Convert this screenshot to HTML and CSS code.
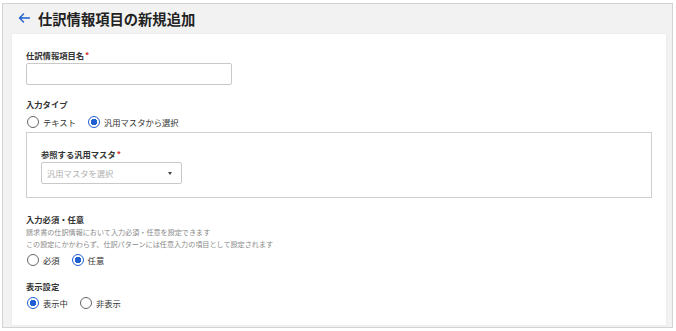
FILE: index.html
```html
<!DOCTYPE html>
<html>
<head>
    <title>仕訳情報項目の新規追加</title>
    <link rel="stylesheet" href="styles.css">
</head>
<body>
    <div class="frame">
        <header class="page-header">
            <svg class="back" width="12" height="10" viewBox="0 0 12 10">
                <path d="M11.5 5H1.5M5.5 1L1.5 5l4 4" fill="none" stroke="#1f5fd1" stroke-width="1.4" stroke-linecap="round" stroke-linejoin="round"/>
            </svg>
            <h1>仕訳情報項目の新規追加</h1>
        </header>

        <div class="card">
            <!-- 項目名 -->
            <div class="label">仕訳情報項目名<span class="req">*</span></div>
            <div class="input"></div>

            <!-- 入力タイプ -->
            <div class="label sec-type">入力タイプ</div>
            <div class="radios">
                <span class="radio"><i class="circle"></i>テキスト</span>
                <span class="radio"><i class="circle on"></i>汎用マスタから選択</span>
            </div>
            <div class="sub-box">
                <div class="label">参照する汎用マスタ<span class="req">*</span></div>
                <div class="select">
                    <span class="placeholder">汎用マスタを選択</span>
                    <span class="caret"></span>
                </div>
            </div>

            <!-- 入力必須・任意 -->
            <div class="label sec-required">入力必須・任意</div>
            <p class="desc">請求書の仕訳情報において入力必須・任意を設定できます</p>
            <p class="desc">この設定にかかわらず、仕訳パターンには任意入力の項目として設定されます</p>
            <div class="radios">
                <span class="radio"><i class="circle"></i>必須</span>
                <span class="radio"><i class="circle on"></i>任意</span>
            </div>

            <!-- 表示設定 -->
            <div class="label sec-display">表示設定</div>
            <div class="radios">
                <span class="radio"><i class="circle on"></i>表示中</span>
                <span class="radio"><i class="circle"></i>非表示</span>
            </div>
        </div>
    </div>
</body>
</html>
```

FILE: styles.css
```css
* {
    box-sizing: border-box;
}
body {
    margin: 0;
    background: #ffffff;
    font-family: "Noto Sans CJK JP", "Noto Sans", sans-serif;
    color: #333;
}
.frame {
    margin: 3px 3px 3px 2px;
    height: 325px;
    border: 1px solid #d3d3d3;
    background: #f2f2f2;
    display: flex;
    flex-direction: column;
}
.page-header {
    height: 30px;
    display: flex;
    align-items: center;
    padding-left: 15px;
    gap: 8px;
}
.page-header h1 {
    margin: 0;
    font-size: 14.3px;
    font-weight: bold;
    color: #222;
    line-height: 20px;
}
.back {
    display: block;
    margin-top: -2px;
}
.card {
    flex: 1;
    margin: 0 6px 2px 9px;
    background: #fff;
    box-shadow: 0 0 1px rgba(0,0,0,0.12);
    padding: 14px 14px 0 14px;
}
.label {
    font-size: 8.3px;
    font-weight: bold;
    line-height: 14px;
    color: #333;
}
.req {
    color: #d93a3a;
    margin-left: 1px;
}
.input {
    width: 206px;
    height: 22px;
    margin-top: 1px;
    border: 1px solid #c9c9c9;
    border-radius: 2px;
}
.sec-type {
    margin-top: 12px;
}
.radios {
    display: flex;
    gap: 11px;
    height: 17px;
    align-items: center;
    margin-top: 2px;
    font-size: 8.3px;
    color: #333;
}
.radio {
    display: flex;
    align-items: center;
    gap: 4px;
}
.circle {
    display: block;
    width: 12px;
    height: 12px;
    margin-left: 1px;
    border: 1.2px solid #666;
    border-radius: 50%;
    background: #fff;
}
.circle.on {
    border: 1.4px solid #1f5fd1;
    background: radial-gradient(circle, #1f5fd1 0 3px, #fff 3.4px);
}
.sub-box {
    margin-top: 2px;
    height: 66px;
    border: 1px solid #cfcfcf;
    padding: 14px 0 0 14px;
}
.select {
    width: 141px;
    height: 22px;
    margin-top: 1px;
    border: 1px solid #c9c9c9;
    border-radius: 2px;
    display: flex;
    align-items: center;
    justify-content: space-between;
    padding: 0 9px 0 5px;
}
.placeholder {
    font-size: 8.3px;
    color: #b0b0b0;
}
.caret {
    width: 0;
    height: 0;
    border-left: 2.5px solid transparent;
    border-right: 2.5px solid transparent;
    border-top: 3px solid #444;
}
.sec-required {
    margin-top: 14px;
}
.desc {
    margin: 0;
    font-size: 7.1px;
    line-height: 12px;
    color: #8a8a8a;
}
.desc + .radios {
    margin-top: 1px;
}
.sec-display {
    margin-top: 11px;
}
.sec-display + .radios {
    margin-top: 1px;
}
```
